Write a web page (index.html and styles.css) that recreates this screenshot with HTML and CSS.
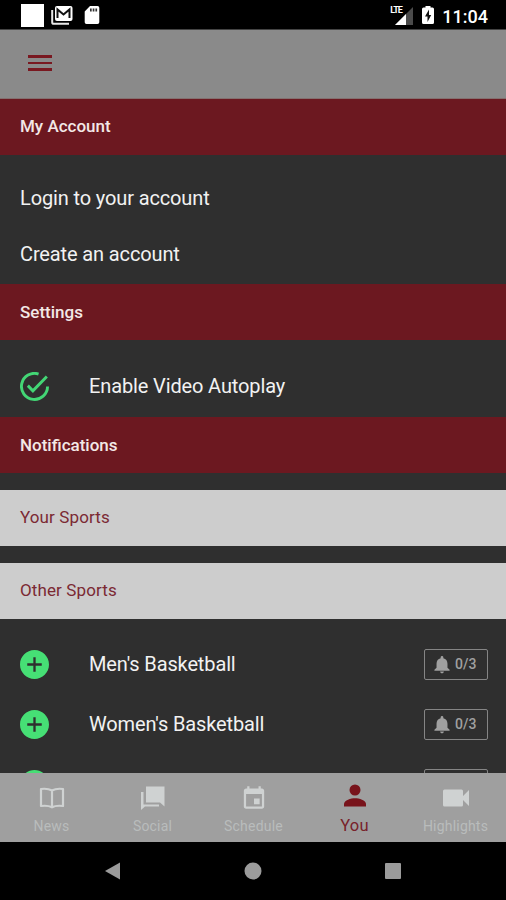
FILE: index.html
```html
<!DOCTYPE html>
<html lang="en">

<head>
    <meta charset="UTF-8">
    <meta name="viewport" content="width=device-width, initial-scale=1.0">
    <title>My Account</title>
    <link rel="stylesheet" href="styles.css">
</head>

<body>
    <!-- Shared icons -->
    <svg class="sprite" aria-hidden="true">
        <symbol id="plus" viewBox="2 2 20 20">
            <path d="M12 2C6.48 2 2 6.48 2 12s4.480 10 10 10 10-4.480 10-10S17.520 2 12 2zm5 10.800h-4.200V17h-1.600v-4.200H7v-1.600h4.200V7h1.600v4.200H17v1.600z"/>
        </symbol>
        <symbol id="bell" viewBox="2.500 1.500 19 21">
            <path d="M12 22.500c1.200 0 2.200-.9 2.200-2.200H9.800c0 1.300 1 2.200 2.200 2.200zm6.500-6.500v-5c0-3.300-1.900-5.640-4.900-6.320V3.700c0-1-.7-1.700-1.600-1.700s-1.600.7-1.600 1.700v.98C7.400 5.360 5.500 7.700 5.500 11v5L3 18.300v1h18v-1z"/>
        </symbol>
    </svg>

    <div class="app">
        <!-- Status Bar -->
        <div class="status-bar">
            <div class="status-left">
                <span class="status-square"></span>
                <svg class="icon-mail" viewBox="0 0 22 20">
                    <path d="M1.200 5v12.200c0 .9.6 1.600 1.600 1.600H18" fill="none" stroke="#e8e8e8" stroke-width="2"/>
                    <rect x="4" y="1" width="17.500" height="15" rx="2" fill="#fff"/>
                    <path d="M6.500 13V4.500l6 5 6-5V13" fill="none" stroke="#111" stroke-width="2"/>
                </svg>
                <svg class="icon-sd" viewBox="0 0 16 20">
                    <path d="M6 1h7.500a1.800 1.800 0 0 1 1.800 1.800v14.400a1.800 1.800 0 0 1-1.800 1.800h-11a1.800 1.800 0 0 1-1.800-1.800V6.500z" fill="#fff"/>
                    <path d="M6 3.500h1.700v3H6zm2.700 0h1.700v3H8.700zm2.700 0h1.700v3h-1.700z" fill="#333"/>
                </svg>
            </div>
            <div class="status-right">
                <div class="signal">
                    <svg viewBox="0 0 18 18">
                        <path d="M0 18L18 0v18z" fill="#4b4b4b"/>
                        <path d="M0 18L11 7v11z" fill="#fff"/>
                    </svg>
                    <span class="lte">LTE</span>
                </div>
                <svg class="icon-battery" viewBox="0 0 12 20">
                    <path d="M3.500 1h5v1.500h2A1.500 1.500 0 0 1 12 4v13.500a1.500 1.500 0 0 1-1.500 1.500h-9A1.500 1.500 0 0 1 0 17.500V4a1.500 1.500 0 0 1 1.500-1.500h2z" fill="#fff"/>
                    <path d="M7 4.500L3 11.500h2.500V17l3.700-7H7z" fill="#111"/>
                </svg>
                <span class="clock">11:04</span>
            </div>
        </div>

        <!-- Header -->
        <header class="header">
            <div class="menu-button">
                <span></span>
                <span></span>
                <span></span>
            </div>
        </header>

        <!-- Content -->
        <main class="content">
            <h2 class="section first">My Account</h2>
            <div class="account-links">
                <div class="link">Login to your account</div>
                <div class="link">Create an account</div>
            </div>

            <h2 class="section">Settings</h2>
            <div class="row setting">
                <svg class="row-icon" viewBox="2 2 20 20">
                    <path d="M14.800 3.400A9 9 0 1 0 21 12" fill="none" stroke="#43d675" stroke-width="2"/>
                    <path d="M7.400 11.400l3.500 3.600 9.600-9.900" fill="none" stroke="#43d675" stroke-width="2"/>
                </svg>
                <span class="row-title">Enable Video Autoplay</span>
            </div>

            <h2 class="section">Notifications</h2>
            <h3 class="group">Your Sports</h3>
            <h3 class="group">Other Sports</h3>

            <div class="sports">
                <div class="row">
                    <svg class="row-icon"><use href="#plus"/></svg>
                    <span class="row-title">Men's Basketball</span>
                    <span class="alerts"><svg><use href="#bell"/></svg>0/3</span>
                </div>
                <div class="row">
                    <svg class="row-icon"><use href="#plus"/></svg>
                    <span class="row-title">Women's Basketball</span>
                    <span class="alerts"><svg><use href="#bell"/></svg>0/3</span>
                </div>
                <div class="row">
                    <svg class="row-icon"><use href="#plus"/></svg>
                    <span class="row-title"></span>
                    <span class="alerts"></span>
                </div>
            </div>
        </main>

        <!-- Tabs -->
        <nav class="tabs">
            <div class="tab">
                <svg viewBox="0 0 26 26">
                    <path d="M13 5.500C10 3.800 6 3.500 2 4v17c4-.5 8-.3 11 1.300 3-1.600 7-1.800 11-1.300V4c-4-.5-8-.2-11 1.500zM13 5.500v16.500" fill="none" stroke="currentColor" stroke-width="2.200" stroke-linejoin="round"/>
                </svg>
                <span>News</span>
            </div>
            <div class="tab">
                <svg viewBox="0 0 26 26">
                    <path d="M6 1.500h18.500v20L20 17.500H6z" fill="currentColor"/>
                    <path d="M1 7h2.500v12.500H19v2H5L1 25z" fill="currentColor"/>
                </svg>
                <span>Social</span>
            </div>
            <div class="tab">
                <svg viewBox="1.500 0 21 23">
                    <path d="M17 12h-5v5h5v-5zM16 1v2H8V1H6v2H5c-1.110 0-1.990.9-1.990 2L3 19c0 1.100.89 2 2 2h14c1.100 0 2-.9 2-2V5c0-1.100-.9-2-2-2h-1V1h-2zm3 18H5V8h14v11z" fill="currentColor"/>
                </svg>
                <span>Schedule</span>
            </div>
            <div class="tab active">
                <svg viewBox="0 0 26 26">
                    <circle cx="13" cy="7" r="5.500" fill="currentColor"/>
                    <path d="M2 23.500V21c0-3.700 7-5.700 11-5.700s11 2 11 5.700v2.500z" fill="currentColor"/>
                </svg>
                <span>You</span>
            </div>
            <div class="tab">
                <svg class="wide" viewBox="0 0 28 26">
                    <path d="M2.500 4.500h17A1.500 1.500 0 0 1 21 6v5l6-6v16l-6-6v5a1.500 1.500 0 0 1-1.500 1.500h-17A1.500 1.500 0 0 1 1 20V6a1.500 1.500 0 0 1 1.500-1.500z" fill="currentColor"/>
                </svg>
                <span>Highlights</span>
            </div>
        </nav>

        <!-- System Navigation -->
        <div class="system-nav">
            <svg viewBox="0 0 18 18"><path d="M1 9l15-8.500v17z"/></svg>
            <svg viewBox="0 0 18 18"><circle cx="9" cy="9" r="8.500"/></svg>
            <svg viewBox="0 0 18 18"><rect x="1" y="1" width="16" height="16" rx="1"/></svg>
        </div>
    </div>
</body>

</html>
```

FILE: styles.css
```css
/* General Styles */
* {
    box-sizing: border-box;
}

body {
    margin: 0;
    font-family: Roboto, sans-serif;
    background: #000;
    color: #f2f2f2;
}

.sprite {
    display: none;
}

svg {
    display: block;
    flex: none;
}

.app {
    display: flex;
    flex-direction: column;
    height: 900px;
    overflow: hidden;
}

/* Status Bar */
.status-bar {
    display: flex;
    justify-content: space-between;
    height: 30px;
    padding: 0 18px 0 21px;
    border-bottom: 1px solid #444;
}

.status-left,
.status-right {
    display: flex;
    align-items: center;
}

.status-square {
    width: 23px;
    height: 23px;
    margin-top: 2px;
    background: #fff;
}

.icon-mail {
    width: 22px;
    height: 20px;
    margin-left: 7px;
}

.icon-sd {
    width: 16px;
    height: 20px;
    margin-left: 11px;
}

.signal {
    position: relative;
    width: 23px;
    height: 20px;
}

.signal svg {
    width: 18px;
    height: 18px;
    margin: 2px 0 0 5px;
}

.lte {
    position: absolute;
    top: 1px;
    left: 0;
    font-size: 9px;
    line-height: 9px;
    font-weight: 700;
    letter-spacing: -1px;
    color: #fff;
}

.icon-battery {
    width: 12px;
    height: 20px;
    margin-left: 9px;
}

.clock {
    margin: 3px 0 0 8px;
    font-size: 18px;
    font-weight: 500;
    color: #fff;
}

/* Header */
.header {
    height: 69px;
    padding: 25px 28px;
    background: #8a8a8a;
    border-bottom: 1px solid #84706f;
}

.menu-button {
    display: flex;
    flex-direction: column;
    gap: 4px;
    width: 24px;
}

.menu-button span {
    height: 2.670px;
    background: #791820;
}

/* Content */
.content {
    height: 674px;
    overflow: hidden;
    background: #2f2f2f;
}

.section,
.group {
    display: flex;
    align-items: center;
    margin: 0;
    height: 56px;
    padding: 0 20px;
    font-size: 17px;
}

.section {
    background: #6c1820;
    color: #f3e8e6;
    font-weight: 500;
}

.section.first {
    padding-bottom: 2px;
}

.account-links {
    height: 129px;
    padding: 15px 20px 0;
}

.link {
    height: 56px;
    line-height: 56px;
    font-size: 20px;
    letter-spacing: -0.13px;
}

.row {
    display: flex;
    align-items: center;
    height: 60px;
    padding: 0 18px 0 20px;
}

.row-icon {
    width: 29px;
    height: 29px;
    fill: #46df75;
}

.row-title {
    flex: 1;
    margin-left: 40px;
    font-size: 20px;
    letter-spacing: -0.13px;
}

.setting {
    height: 77px;
    padding-top: 15px;
}

.group {
    margin-top: 17px;
    padding-bottom: 2px;
    background: #cdcdcd;
    color: #7b2933;
    font-weight: 400;
    letter-spacing: 0.12px;
}

.sports {
    padding-top: 15px;
}

.alerts {
    display: flex;
    align-items: center;
    gap: 5px;
    width: 64px;
    height: 31px;
    padding-left: 9px;
    border: 1px solid #858585;
    border-radius: 2px;
    font-size: 14px;
    font-weight: 500;
    color: #a0a0a0;
}

.alerts svg {
    width: 16px;
    height: 19px;
    fill: #a0a0a0;
}

/* Tabs */
.tabs {
    display: flex;
    height: 69px;
    padding-left: 1px;
    background: #9f9f9f;
}

.tab {
    display: flex;
    flex: 1;
    flex-direction: column;
    align-items: center;
    padding-top: 12px;
    color: #cfd2d2;
    font-size: 14px;
}

.tab svg {
    width: 26px;
    height: 26px;
}

.tab .wide {
    width: 28px;
}

.tab span {
    margin-top: 7px;
    line-height: 17px;
    color: #b9bcbc;
    letter-spacing: 0.2px;
}

.tab.active {
    padding-top: 10px;
    color: #78131b;
}

.tab.active span {
    margin-top: 8px;
    font-size: 16.500px;
    color: #78222a;
}

/* System Navigation */
.system-nav {
    display: flex;
    justify-content: center;
    gap: 122px;
    height: 58px;
    padding-top: 20px;
    background: #000;
}

.system-nav svg {
    width: 18px;
    height: 18px;
    fill: #9b9b9b;
}
```
